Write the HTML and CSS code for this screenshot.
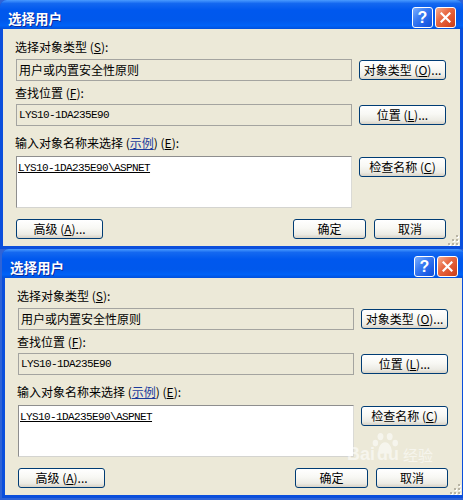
FILE: index.html
```html
<!DOCTYPE html>
<html>
<head>
<meta charset="utf-8">
<link rel="stylesheet" href="styles.css">
</head>
<body>
<div class="desk">
  <div class="win">
    <div class="titlebar">
      <span class="title">选择用户</span>
      <span class="cap help">?</span>
      <span class="cap close"><svg width="11" height="11" viewBox="0 0 11 11"><path d="M1.5 1.5 L9.5 9.5 M9.5 1.5 L1.5 9.5" stroke="#fff" stroke-width="2.2" stroke-linecap="square"/></svg></span>
    </div>
    <div class="body">
      <div class="label l1">选择对象类型 (<u>S</u>):</div>
      <div class="row r1"><div class="field ro">用户或内置安全性原则</div><div class="btn">对象类型 (<u>O</u>)...</div></div>
      <div class="label l2">查找位置 (<u>F</u>):</div>
      <div class="row r2"><div class="field ro mono">LYS10-1DA235E90</div><div class="btn">位置 (<u>L</u>)...</div></div>
      <div class="label l3">输入对象名称来选择 (<span class="link">示例</span>) (<u>E</u>):</div>
      <div class="row r3"><div class="field area mono"><u>LYS10-1DA235E90\ASPNET</u></div><div class="btn">检查名称 (<u>C</u>)</div></div>
      <div class="row r4"><div class="btn adv">高级 (<u>A</u>)...</div><div class="btn ok">确定</div><div class="btn cancel">取消</div></div>
    </div>
    <svg class="grip" width="11" height="11" viewBox="0 0 11 11">
      <g fill="#fff"><rect x="9" y="1" width="2" height="2"/><rect x="5" y="5" width="2" height="2"/><rect x="9" y="5" width="2" height="2"/><rect x="1" y="9" width="2" height="2"/><rect x="5" y="9" width="2" height="2"/><rect x="9" y="9" width="2" height="2"/></g>
      <g fill="#B8B4A4"><rect x="8" y="0" width="2" height="2"/><rect x="4" y="4" width="2" height="2"/><rect x="8" y="4" width="2" height="2"/><rect x="0" y="8" width="2" height="2"/><rect x="4" y="8" width="2" height="2"/><rect x="8" y="8" width="2" height="2"/></g>
    </svg>
  </div>
  <div class="win win2">
    <div class="titlebar">
      <span class="title">选择用户</span>
      <span class="cap help">?</span>
      <span class="cap close"><svg width="11" height="11" viewBox="0 0 11 11"><path d="M1.5 1.5 L9.5 9.5 M9.5 1.5 L1.5 9.5" stroke="#fff" stroke-width="2.2" stroke-linecap="square"/></svg></span>
    </div>
    <div class="body">
      <div class="label l1">选择对象类型 (<u>S</u>):</div>
      <div class="row r1"><div class="field ro">用户或内置安全性原则</div><div class="btn">对象类型 (<u>O</u>)...</div></div>
      <div class="label l2">查找位置 (<u>F</u>):</div>
      <div class="row r2"><div class="field ro mono">LYS10-1DA235E90</div><div class="btn">位置 (<u>L</u>)...</div></div>
      <div class="label l3">输入对象名称来选择 (<span class="link">示例</span>) (<u>E</u>):</div>
      <div class="row r3"><div class="field area mono"><u>LYS10-1DA235E90\ASPNET</u></div><div class="btn">检查名称 (<u>C</u>)</div></div>
      <div class="row r4"><div class="btn adv">高级 (<u>A</u>)...</div><div class="btn ok">确定</div><div class="btn cancel">取消</div></div>
    </div>
    <svg class="grip" width="11" height="11" viewBox="0 0 11 11">
      <g fill="#fff"><rect x="9" y="1" width="2" height="2"/><rect x="5" y="5" width="2" height="2"/><rect x="9" y="5" width="2" height="2"/><rect x="1" y="9" width="2" height="2"/><rect x="5" y="9" width="2" height="2"/><rect x="9" y="9" width="2" height="2"/></g>
      <g fill="#B8B4A4"><rect x="8" y="0" width="2" height="2"/><rect x="4" y="4" width="2" height="2"/><rect x="8" y="4" width="2" height="2"/><rect x="0" y="8" width="2" height="2"/><rect x="4" y="8" width="2" height="2"/><rect x="8" y="8" width="2" height="2"/></g>
    </svg>
  </div>
  <div class="watermark">
    <span class="wm-lat">Bai</span>
    <span class="wm-paw"><svg width="28" height="24" viewBox="0 0 30 26">
      <g fill="#fff">
        <ellipse cx="9" cy="5" rx="3.2" ry="4"/>
        <ellipse cx="19" cy="5" rx="3.2" ry="4"/>
        <ellipse cx="3.5" cy="12" rx="3" ry="3.6"/>
        <ellipse cx="25" cy="12" rx="3" ry="3.6"/>
        <path d="M14 11 C9 11 6 18 7 22 C8 25 12 23 14 23 C16 23 20 25 21 22 C22 18 19 11 14 11 Z"/>
      </g>
    </svg></span>
    <span class="wm-lat">du</span>
    <span class="wm-cn">经验</span>
  </div>
</div>
</body>
</html>
```

FILE: styles.css
```css
* {
  box-sizing: border-box;
}

html,
body {
  margin: 0;
  padding: 0;
}

body {
  width: 463px;
  height: 500px;
  overflow: hidden;
  background: #2F63D6;
  font-family: "Noto Sans CJK SC", "Noto Sans", sans-serif;
  font-size: 12px;
  color: #000;
}

.desk {
  position: relative;
  width: 463px;
  height: 500px;
  overflow: hidden;
}

.win {
  position: relative;
  width: 463px;
  height: 249px;
  background: #0B4FDC;
  padding: 0 3px 3px;
  border-radius: 7px 7px 0 0;
  display: flex;
  flex-direction: column;
}

.win2 {
  margin-left: 2px;
}

.titlebar {
  height: 29px;
  margin: 0 -3px;
  padding: 6px 7px 0 8px;
  display: flex;
  align-items: center;
  border-radius: 7px 7px 0 0;
  background: linear-gradient(#4A9BFF 0%, #1468F0 12%, #0058EE 35%, #0058EC 70%, #0062F7 88%, #0050DC 100%);
}

.title {
  flex: 1;
  color: #fff;
  font-weight: bold;
  font-size: 13.5px;
  line-height: 16px;
  white-space: nowrap;
  text-shadow: 1px 1px 0 #0A2A9C;
}

.cap {
  width: 21px;
  height: 21px;
  border: 1px solid #fff;
  border-radius: 3px;
  display: flex;
  align-items: center;
  justify-content: center;
}

.help {
  margin-right: 2px;
  background: linear-gradient(135deg, #7CB0FF 0%, #3A7BF2 40%, #1C5DE6 75%, #1450D2 100%);
  color: #fff;
  font-family: "Liberation Sans", sans-serif;
  font-weight: bold;
  font-size: 16px;
  line-height: 16px;
}

.close {
  background: linear-gradient(135deg, #F6AE90 0%, #E86A44 40%, #DB4E28 75%, #C43E1A 100%);
}

.body {
  flex: 1;
  background: #ECE9D8;
  padding: 11px 14px 7px 13px;
  display: flex;
  flex-direction: column;
}

.label {
  height: 14px;
  line-height: 14px;
  margin-left: -1px;
  white-space: nowrap;
}

.link {
  color: #1C3C9C;
  text-decoration: underline;
}

.l2 {
  margin-top: 5px;
}

.l3 {
  margin-top: 10px;
}

.row {
  display: flex;
  align-items: center;
  gap: 7px;
}

.r1 {
  margin-top: 5px;
}

.r2 {
  margin-top: 4px;
}

.r3 {
  margin-top: 6px;
  align-items: flex-start;
}

.r3 .btn {
  margin-top: 1px;
}

.r4 {
  margin-top: 11px;
  gap: 0;
}

.field {
  width: 336px;
  height: 22px;
  border: 1px solid #A4A4A0;
  background: #ECE9D8;
  padding: 0 2px;
  line-height: 20px;
  white-space: nowrap;
}

.area {
  height: 52px;
  background: #fff;
  border-color: #8E8E8E #DADAD6 #D4D4D0 #8E8E8E;
  padding: 4px 1px;
  line-height: 14px;
}

.mono {
  font-family: "Liberation Mono", monospace;
  font-size: 11px;
  letter-spacing: -0.6px;
}

.btn {
  width: 87px;
  height: 20px;
  border: 1px solid #003C74;
  border-radius: 3px;
  background: linear-gradient(#FFFFFF 0%, #F8F8F4 45%, #ECEBE4 80%, #D8D2C6 100%);
  display: flex;
  align-items: center;
  justify-content: center;
  line-height: 18px;
  white-space: nowrap;
}

.ok {
  width: 73px;
  margin-left: auto;
}

.cancel {
  width: 72px;
  margin-left: 8px;
}

.grip {
  position: absolute;
  right: 4px;
  bottom: 3px;
}

.watermark {
  position: absolute;
  left: 347px;
  top: 432px;
  display: flex;
  align-items: flex-end;
  gap: 1px;
  opacity: 0.55;
  pointer-events: none;
}

.wm-lat {
  color: #fff;
  font-family: "Liberation Sans", sans-serif;
  font-weight: bold;
  font-size: 18px;
  line-height: 20px;
  white-space: nowrap;
}

.wm-paw {
  display: flex;
  margin: 0 -24px 8px -4px;
}

.wm-cn {
  margin-left: 3px;
  color: #fff;
  font-size: 15px;
  line-height: 19px;
  white-space: nowrap;
}
```
